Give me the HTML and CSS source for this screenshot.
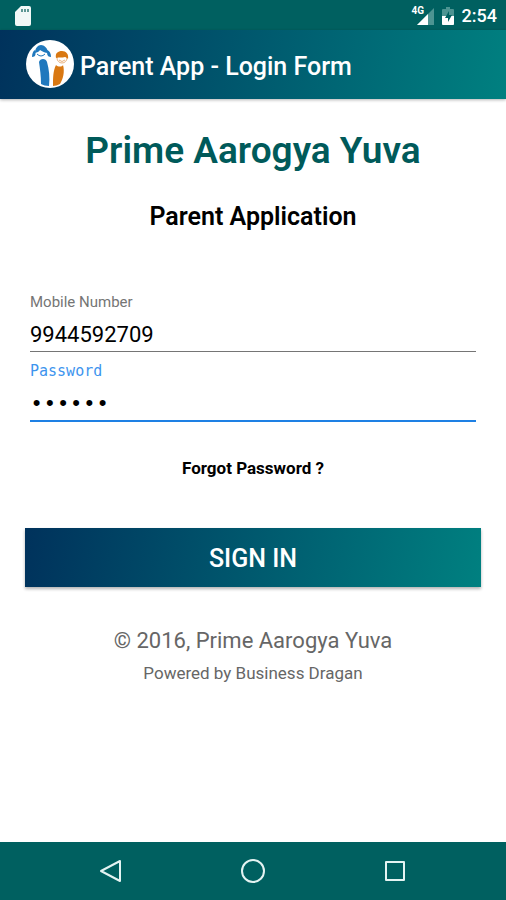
FILE: index.html
```html
<!DOCTYPE html>
<html lang="en">
<head>
    <meta charset="UTF-8">
    <meta name="viewport" content="width=device-width, initial-scale=1.0">
    <title>Parent App - Login Form</title>
    <link rel="stylesheet" href="styles.css">
</head>
<body>
    <div class="status-bar">
        <svg class="sd-card" width="16" height="20" viewBox="0 0 16 20" aria-hidden="true">
            <path d="M6 0h8a2 2 0 0 1 2 2v16a2 2 0 0 1-2 2H2a2 2 0 0 1-2-2V6z" fill="#f1f8f7"/>
            <path d="M7 3v3M10 3v3M13 3v3" stroke="#5d9794" stroke-width="2"/>
        </svg>
        <div class="status-right">
            <div class="signal">
                <svg width="18" height="17" viewBox="0 0 18 17" aria-hidden="true">
                    <path d="M18 0v17H1z" fill="#4d9492"/>
                    <path d="M12 6v11H1z" fill="#fff"/>
                </svg>
                <span class="network">4G</span>
            </div>
            <svg width="12" height="18" viewBox="0 0 12 18" aria-hidden="true">
                <path d="M4 0h4v2h3a1 1 0 0 1 1 1v14a1 1 0 0 1-1 1H1a1 1 0 0 1-1-1V3a1 1 0 0 1 1-1h3z" fill="#4d9492"/>
                <path d="M0 9h12v8a1 1 0 0 1-1 1H1a1 1 0 0 1-1-1z" fill="#fff"/>
                <path d="M7 4L3 11h3v4l4-7H7z" fill="#006060"/>
            </svg>
            <span class="clock">2:54</span>
        </div>
    </div>

    <header class="app-bar">
        <svg class="logo" width="48" height="48" viewBox="0 0 48 48" aria-hidden="true">
            <circle cx="24" cy="24" r="24" fill="#fff"/>
            <!-- girl -->
            <path d="M13 22c1-4 7-4 8 0 2 7 3 15 2 24-3 0-6-1-8-2 0-8-1-15-2-22z" fill="#1f78bd"/>
            <path d="M9 13c0-5 3-8 6-8s7 3 7 8c-3 0-6-2-8-3-1 2-3 2-5 3z" fill="#1f78bd"/>
            <path d="M9 10c-2 1-3 4-3 7 4 0 4-3 3-7zM21 10c3 1 4 4 4 7-4 0-4-3-4-7z" fill="#1f78bd"/>
            <path d="M11 14q4 4 8 0" fill="none" stroke="#1f78bd"/>
            <!-- boy -->
            <path d="M30 25c2 2 6 2 7 0 2 7 0 14-3 19-2 1-5 2-7 2 0-8 0-15 3-21z" fill="#d97812"/>
            <circle cx="36" cy="18" r="5" fill="#fff" stroke="#e9b27d"/>
            <path d="M30 18c-1-5 2-7 6-7s7 3 6 8c-1-1-2-2-3-2-3 1-6 0-9 1z" fill="#d97812"/>
            <path d="M33 20q3 3 6 0" fill="none" stroke="#e9b27d"/>
        </svg>
        <span class="app-title">Parent App - Login Form</span>
    </header>

    <main>
        <h1>Prime Aarogya Yuva</h1>
        <h2>Parent Application</h2>

        <form>
            <div class="field">
                <label for="mobile">Mobile Number</label>
                <input type="tel" id="mobile" value="9944592709">
            </div>
            <div class="field active">
                <label for="password">Password</label>
                <input type="password" id="password" value="123456">
            </div>
            <a class="forgot" href="#">Forgot Password ?</a>
            <button type="submit" class="sign-in">SIGN IN</button>
        </form>

        <footer>
            <p class="copyright">© 2016, Prime Aarogya Yuva</p>
            <p class="powered">Powered by Business Dragan</p>
        </footer>
    </main>

    <nav class="nav-bar">
        <button type="button" aria-label="Back">
            <svg width="24" height="24" viewBox="0 0 24 24"><path d="M21 2v20L2 12z"/></svg>
        </button>
        <button type="button" aria-label="Home">
            <svg width="24" height="24" viewBox="0 0 24 24"><circle cx="12" cy="12" r="11"/></svg>
        </button>
        <button type="button" aria-label="Recent apps">
            <svg width="24" height="24" viewBox="0 0 24 24"><rect x="3" y="3" width="18" height="18"/></svg>
        </button>
    </nav>
</body>
</html>
```
FILE: styles.css
```css
* {
    box-sizing: border-box;
}

body {
    margin: 0;
    min-height: 100vh;
    display: flex;
    flex-direction: column;
    font-family: Roboto, sans-serif;
    background-color: #fff;
    color: #000;
}

.status-bar {
    display: flex;
    justify-content: space-between;
    align-items: center;
    height: 30px;
    padding: 2px 9px 0 15px;
    background-color: #006060;
    color: #fff;
}

.status-right {
    display: flex;
    align-items: center;
    gap: 8px;
}

.signal {
    position: relative;
    height: 17px;
}

.signal svg {
    display: block;
}

.network {
    position: absolute;
    top: -2px;
    left: -4px;
    font-size: 10px;
    line-height: 10px;
    font-weight: 700;
}

.clock {
    font-size: 18px;
    line-height: 20px;
    font-weight: 500;
}

.app-bar {
    display: flex;
    align-items: center;
    gap: 6px;
    height: 69px;
    padding: 0 26px 2px;
    background: linear-gradient(100deg, #00325c, #008080);
    box-shadow: 0 1px 3px rgba(0, 0, 0, 0.3);
    color: #fff;
}

.app-title {
    padding-top: 5px;
    font-size: 25px;
    font-weight: 500;
}

main {
    flex: 1;
    padding: 29px 25px;
    text-align: center;
}

h1 {
    margin: 0;
    font-size: 37px;
    line-height: 46px;
    font-weight: 600;
    color: #005a5a;
}

h2 {
    margin: 28px 0 0;
    font-size: 25px;
    line-height: 30px;
    font-weight: 600;
}

form {
    margin-top: 60px;
}

.field {
    display: flex;
    flex-direction: column;
    margin: 0 5px;
    text-align: left;
}

.field label {
    font-size: 15px;
    line-height: 20px;
    color: #757575;
}

.field input {
    width: 100%;
    height: 40px;
    padding: 5px 0 0;
    border: none;
    border-bottom: 1px solid #757575;
    outline: none;
    background: none;
    font-family: inherit;
    font-size: 22px;
    color: #000;
}

.field.active {
    margin-top: 9px;
    font-family: "DejaVu Sans Mono", monospace;
}

.field.active label {
    color: #3d94ee;
}

.field.active input {
    height: 41px;
    padding-top: 8px;
    border-bottom: 2px solid #1e80e4;
    font-family: "Liberation Mono", monospace;
}

.forgot {
    display: inline-block;
    margin-top: 35px;
    font-size: 17px;
    line-height: 22px;
    font-weight: 700;
    color: #000;
    text-decoration: none;
}

.sign-in {
    display: block;
    width: 100%;
    height: 59px;
    margin-top: 49px;
    padding: 2px 0 0;
    border: none;
    background: linear-gradient(100deg, #00325c, #008080);
    box-shadow: 0 2px 3px rgba(0, 0, 0, 0.3);
    font-family: inherit;
    font-size: 25px;
    font-weight: 500;
    color: #fff;
}

footer {
    margin-top: 39px;
    color: #666;
}

footer p {
    margin: 0;
}

.copyright {
    font-size: 22px;
    line-height: 30px;
}

.powered {
    margin-top: 5px;
    font-size: 17px;
    line-height: 24px;
}

.nav-bar {
    display: flex;
    justify-content: center;
    align-items: center;
    gap: 118px;
    height: 58px;
    background-color: #006060;
}

.nav-bar button {
    width: 24px;
    height: 24px;
    padding: 0;
    border: none;
    background: none;
}

.nav-bar svg {
    display: block;
    fill: none;
    stroke: #e4f3f2;
    stroke-width: 2;
    stroke-linejoin: round;
}
```
